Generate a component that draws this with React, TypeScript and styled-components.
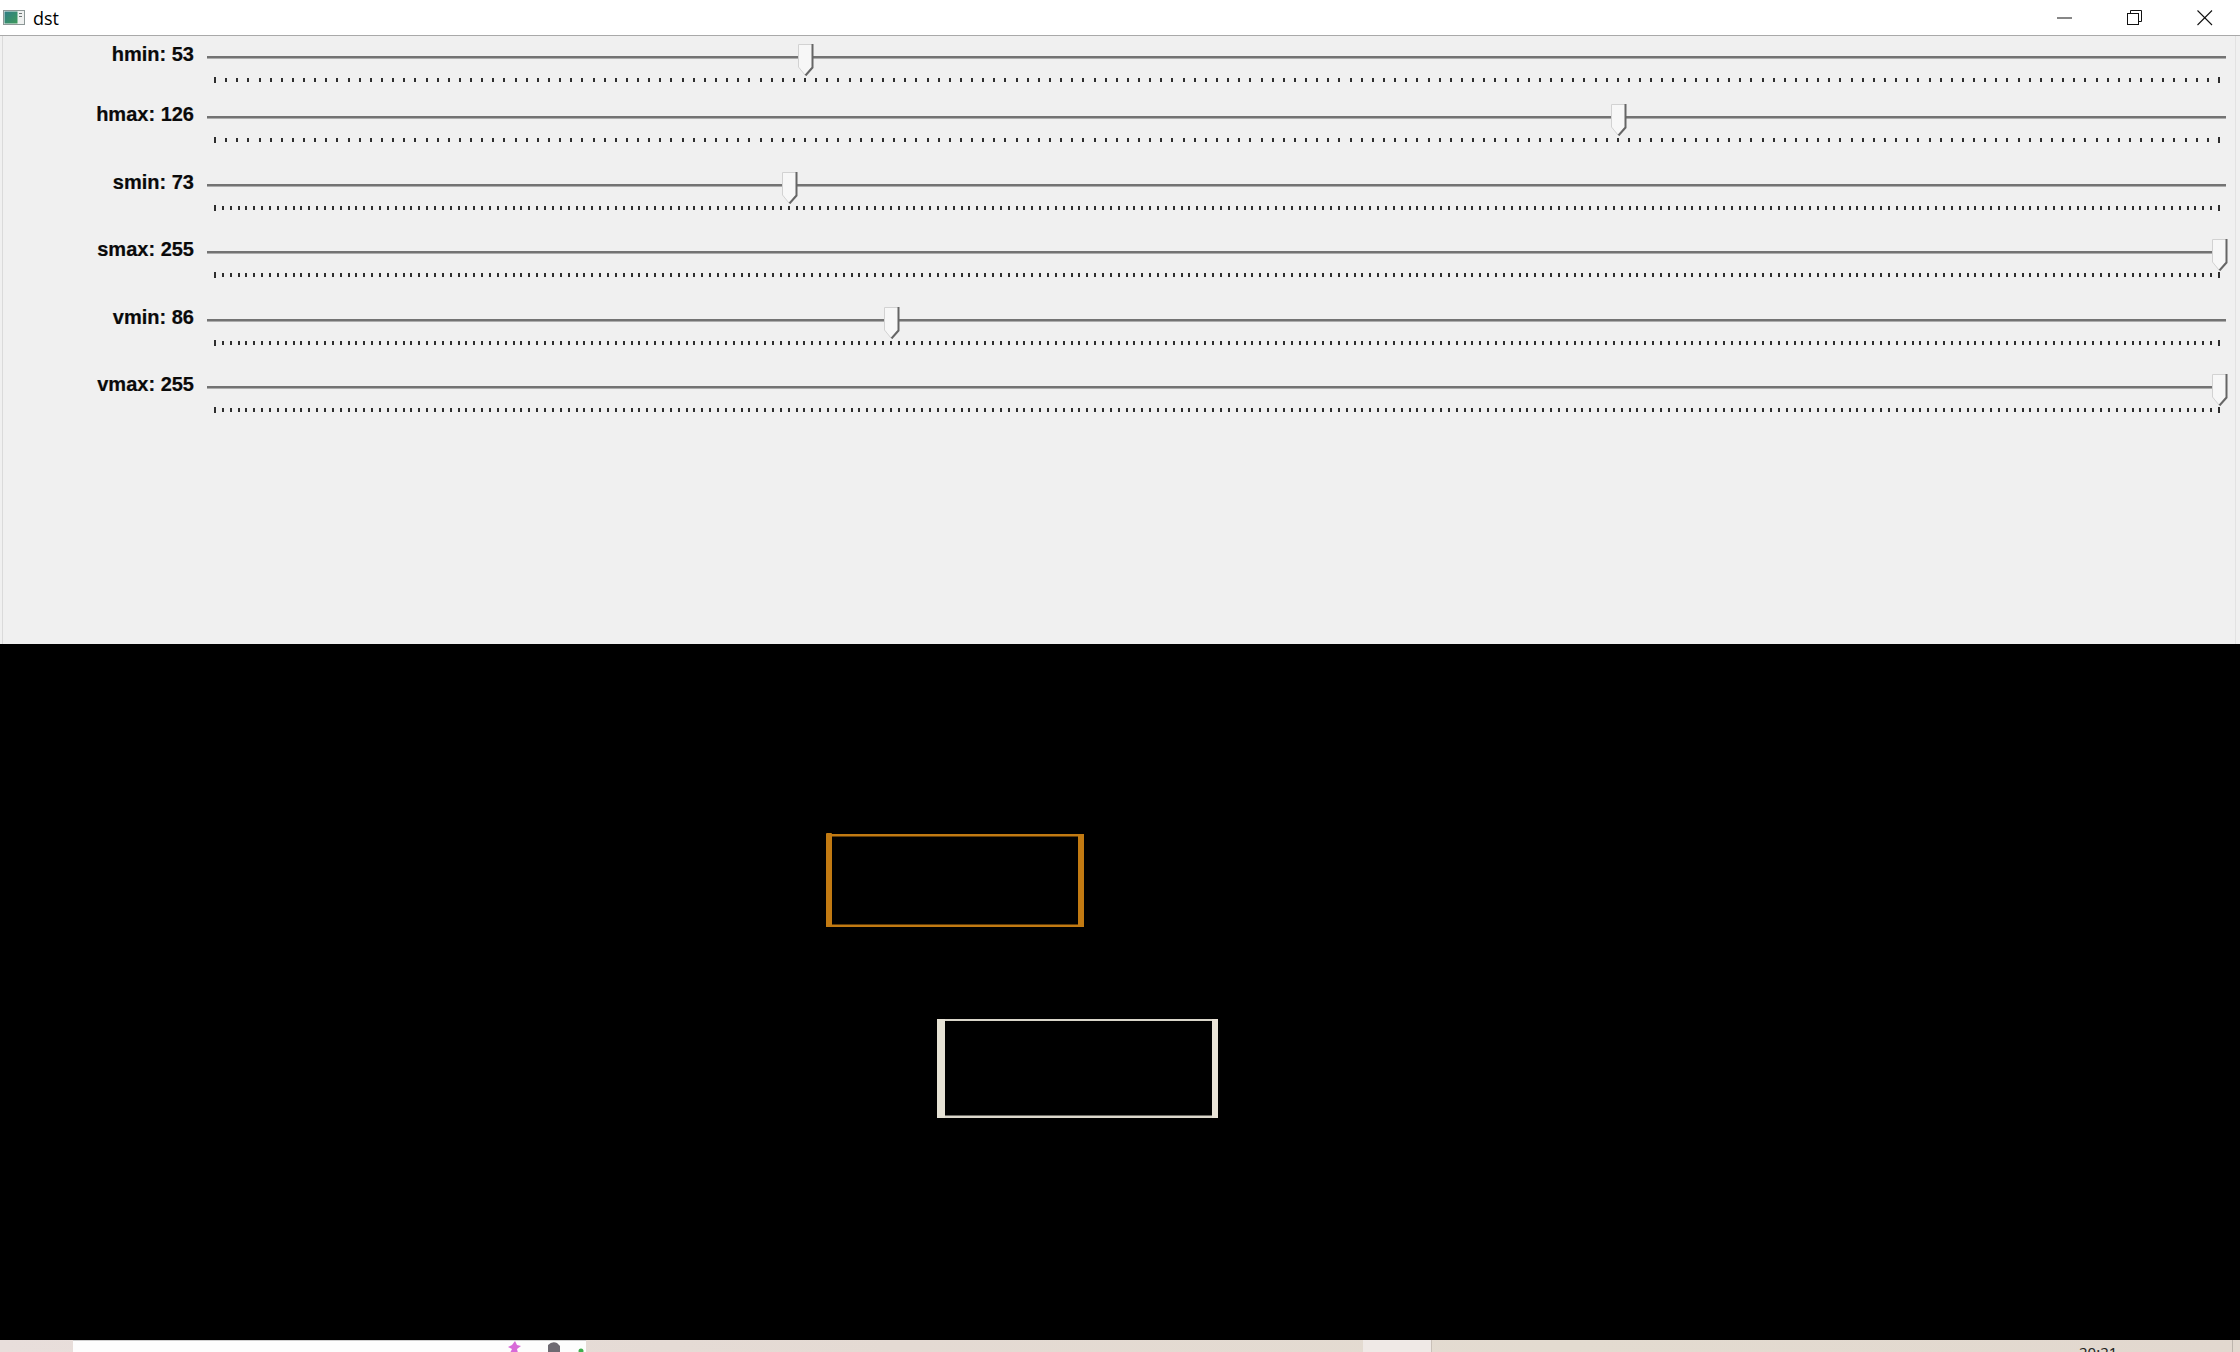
import React from "react";
import styled, { createGlobalStyle } from "styled-components";

const GlobalStyle = createGlobalStyle`
  html, body { margin: 0; padding: 0; background: #000; overflow: hidden; }
  #root { width: 2240px; height: 1352px; }
`;

const Window = styled.div`
  width: 2240px;
  height: 1352px;
  display: flex;
  flex-direction: column;
  background: #fff;
  overflow: hidden;
`;

const TitleBar = styled.div`
  flex: none;
  height: 35px;
  display: flex;
  align-items: center;
  background: #fff;
  border-bottom: 1px solid #a9a9a9;
`;

const TitleIcon = styled.svg`
  margin-left: 3px;
  flex: none;
`;

const TitleText = styled.span`
  margin-left: 8px;
  font-family: "Open Sans", "Noto Sans", sans-serif;
  font-size: 18px;
  color: #000;
  flex: 1;
`;

const CaptionButton = styled.div`
  width: 70px;
  height: 35px;
  display: flex;
  align-items: center;
  justify-content: center;
`;

const Panel = styled.div`
  flex: none;
  height: 608px;
  background: #f0f0f0;
  display: flex;
  flex-direction: column;
  box-shadow: inset 2px 0 0 #f0f0f0, inset 3px 0 0 #dadada,
    inset -4px 0 0 #f0f0f0, inset -5px 0 0 #e2e2e2;
`;

const Row = styled.div<{ $h: number }>`
  flex: none;
  height: ${(p) => p.$h}px;
  display: grid;
  grid-template-columns: 194px 1fr;
  column-gap: 13px;
  padding-right: 14px;
`;

const Label = styled.div`
  padding-top: 7px;
  line-height: 23px;
  text-align: right;
  font-family: "Liberation Sans", Arial, sans-serif;
  font-weight: bold;
  font-size: 20px;
  color: #0a0a0a;
  white-space: nowrap;
  -webkit-text-stroke: 0.2px #0a0a0a;
`;

const SliderArea = styled.div`
  position: relative;
  display: flex;
  flex-direction: column;
`;

const Track = styled.div`
  margin-top: 20px;
  height: 2px;
  background: #737373;
  border-bottom: 1px solid #adadad;
`;

const TickSvg = styled.svg`
  margin-top: 17px;
  display: block;
`;

const ThumbSvg = styled.svg`
  position: absolute;
  top: 8px;
`;

const ImageArea = styled.svg`
  flex: none;
  display: block;
  background: #000;
`;

const Taskbar = styled.div`
  flex: none;
  height: 12px;
  display: flex;
  overflow: hidden;
  background: linear-gradient(90deg, #e8dedb 0%, #e4dad3 40%, #e3dbd0 70%, #e2d8cf 100%);
`;

const TaskPad = styled.div<{ $w: number }>`
  flex: none;
  width: ${(p) => p.$w}px;
`;

const SearchBox = styled.div`
  flex: none;
  width: 513px;
  background: #fdfdfd;
  border-top: 1px solid #cfcfcf;
  display: flex;
  justify-content: flex-end;
  align-items: flex-start;
`;

const QuickBox = styled.div`
  flex: none;
  width: 68px;
  background: #efe9e6;
  border-right: 1px solid #c9c0b8;
`;

const Clock = styled.div`
  flex: none;
  width: 60px;
  padding-top: 5px;
  font-family: "Noto Sans", "Open Sans", sans-serif;
  font-size: 15px;
  line-height: 15px;
  color: #222;
`;

const EdgeLine = styled.div`
  flex: none;
  width: 1px;
  background: #bdb5ad;
  margin-left: auto;
  margin-right: 7px;
`;

const SPAN = 2004;
const START = 8;
const AREA_W = 2019;

const tipX = (v: number, max: number) => START + (v * SPAN) / max;

const TickScale: React.FC<{ max: number }> = ({ max }) => {
  const rects: React.ReactNode[] = [];
  for (let i = 0; i <= max; i++) {
    const x = Math.round(tipX(i, max));
    const end = i === 0 || i === max;
    rects.push(
      <rect key={i} x={x - 1} y={end ? 1 : 2} width={2} height={end ? 6 : 4} />
    );
  }
  return (
    <TickSvg width={AREA_W} height={8} viewBox={`0 0 ${AREA_W} 8`} fill="#2e2e2e">
      {rects}
    </TickSvg>
  );
};

const Thumb: React.FC<{ left: number }> = ({ left }) => (
  <ThumbSvg width={17} height={32} viewBox="0 0 17 32" style={{ left: left - 7 }}>
    <polygon points="0.5,0.5 14.5,0.5 14.5,23 7,31 0.5,23" fill="#f7f7f7" stroke="#d2d2d2" strokeWidth={1} />
    <polyline points="14.5,0 14.5,23.5 7.5,31.5" fill="none" stroke="#666" strokeWidth={2} />
  </ThumbSvg>
);

type SliderDef = { name: string; value: number; max: number; h: number };

const sliders: SliderDef[] = [
  { name: "hmin", value: 53, max: 180, h: 60 },
  { name: "hmax", value: 126, max: 180, h: 68 },
  { name: "smin", value: 73, max: 255, h: 67 },
  { name: "smax", value: 255, max: 255, h: 68 },
  { name: "vmin", value: 86, max: 255, h: 67 },
  { name: "vmax", value: 255, max: 255, h: 67 },
];

const SliderRow: React.FC<{ s: SliderDef }> = ({ s }) => (
  <Row $h={s.h}>
    <Label>
      {s.name}: {s.value}
    </Label>
    <SliderArea>
      <Track />
      <TickScale max={s.max} />
      <Thumb left={tipX(s.value, s.max)} />
    </SliderArea>
  </Row>
);

const AppIcon = () => (
  <TitleIcon width={22} height={15} viewBox="0 0 22 15">
    <defs>
      <linearGradient id="ig" x1="0" y1="0" x2="1" y2="1">
        <stop offset="0" stopColor="#2f7d86" />
        <stop offset="1" stopColor="#3e9a5a" />
      </linearGradient>
    </defs>
    <rect x="0.5" y="0.5" width="21" height="14" fill="#eef0ef" stroke="#8c9796" />
    <rect x="1.5" y="1.5" width="13" height="12" fill="url(#ig)" />
    <rect x="16" y="3" width="3" height="1" fill="#6d7575" />
    <rect x="16" y="6" width="3" height="1" fill="#6d7575" />
  </TitleIcon>
);

export default function App() {
  return (
    <>
      <GlobalStyle />
      <Window>
        <TitleBar>
          <AppIcon />
          <TitleText>dst</TitleText>
          <CaptionButton>
            <svg width={16} height={2} viewBox="0 0 16 2">
              <rect x="0" y="0.5" width="15" height="1" fill="#111" />
            </svg>
          </CaptionButton>
          <CaptionButton>
            <svg width={16} height={16} viewBox="0 0 16 16" fill="none" stroke="#111" strokeWidth={1}>
              <rect x="0.5" y="3.5" width="11" height="11" />
              <polyline points="3.5,3.5 3.5,0.5 14.5,0.5 14.5,11.5 11.5,11.5" />
            </svg>
          </CaptionButton>
          <CaptionButton>
            <svg width={16} height={16} viewBox="0 0 16 16" stroke="#111" strokeWidth={1.1}>
              <line x1="0.5" y1="0.5" x2="15" y2="15" />
              <line x1="15" y1="0.5" x2="0.5" y2="15" />
            </svg>
          </CaptionButton>
        </TitleBar>
        <Panel>
          {sliders.map((s) => (
            <SliderRow key={s.name} s={s} />
          ))}
        </Panel>
        <ImageArea width={2240} height={696} viewBox="0 0 2240 696">
          <g fill="#c27a12">
            <rect x="826" y="190" width="258" height="2.5" />
            <rect x="826" y="280.5" width="258" height="2.5" />
            <rect x="826" y="189" width="6" height="94" rx="1" />
            <rect x="1078" y="190" width="6" height="93" rx="1" />
          </g>
          <g>
            <rect x="937" y="375" width="281" height="2" fill="#d9d5c9" />
            <rect x="937" y="471.5" width="281" height="2.5" fill="#dcd8cc" />
            <rect x="937" y="375" width="8" height="99" fill="#e6e2d5" />
            <rect x="1212" y="375" width="6" height="99" fill="#e9e3d7" />
          </g>
        </ImageArea>
        <Taskbar>
          <TaskPad $w={73} />
          <SearchBox>
            <svg width={80} height={12} viewBox="0 0 80 12">
              <polygon points="6,4 9,0 11,4 15,5 11,8 12,12 4,12 6,8 2,6" fill="#d86ad8" />
              <path d="M42,12 L42,4 Q46,0 51,2 L54,5 L54,12 Z" fill="#6e6a72" />
              <circle cx="75" cy="10" r="2.5" fill="#3fae4c" />
            </svg>
          </SearchBox>
          <TaskPad $w={777} />
          <QuickBox />
          <TaskPad $w={647} />
          <Clock>20:21</Clock>
          <EdgeLine />
        </Taskbar>
      </Window>
    </>
  );
}
